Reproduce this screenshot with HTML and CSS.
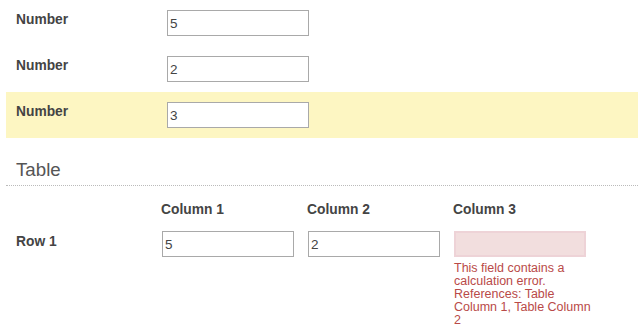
FILE: index.html
```html
<!DOCTYPE html>
<html>
<head>
<meta charset="utf-8">
<link rel="stylesheet" href="styles.css">
</head>
<body>
<div class="page">
  <div class="field">
    <label class="label">Number</label>
    <input class="input" type="text" value="5">
  </div>
  <div class="field">
    <label class="label">Number</label>
    <input class="input" type="text" value="2">
  </div>
  <div class="field field-highlight">
    <label class="label">Number</label>
    <input class="input" type="text" value="3">
  </div>

  <h2 class="section-title">Table</h2>

  <div class="table">
    <div class="cell"></div>
    <div class="cell col-head">Column 1</div>
    <div class="cell col-head">Column 2</div>
    <div class="cell col-head">Column 3</div>

    <div class="cell row-head">Row 1</div>
    <div class="cell"><input class="input table-input" type="text" value="5"></div>
    <div class="cell"><input class="input table-input" type="text" value="2"></div>
    <div class="cell">
      <input class="input table-input input-error" type="text" value="">
      <div class="error-text">This field contains a calculation error. References: Table Column 1, Table Column 2</div>
    </div>
  </div>
</div>
</body>
</html>
```
FILE: styles.css
```css
html, body {
  margin: 0;
  padding: 0;
  background: #ffffff;
}
body {
  font-family: "Liberation Sans", Arial, sans-serif;
  color: #444444;
}
.page {
  padding-left: 6px;
}
.field {
  display: flex;
  align-items: flex-start;
  height: 46px;
  box-sizing: border-box;
  padding: 10px 10px;
}
.field-highlight {
  background: #fdf6c2;
}
.label {
  width: 151px;
  flex: none;
  font-size: 13.8px;
  font-weight: bold;
  line-height: 16px;
  margin-top: 2px;
  color: #444444;
}
.input {
  box-sizing: border-box;
  width: 142px;
  height: 26px;
  border: 1px solid #a9a9a9;
  padding: 0 2px;
  margin: 0;
  font-family: "Liberation Sans", Arial, sans-serif;
  font-size: 13.5px;
  color: #444444;
  background: #ffffff;
  outline: none;
}
.section-title {
  margin: 21px 0 0 0;
  padding: 0 10px 4px 10px;
  font-size: 18.7px;
  line-height: 22px;
  font-weight: normal;
  color: #555555;
  border-bottom: 1px dotted #bbbbbb;
}
.table {
  display: grid;
  grid-template-columns: 145px 146px 146px 146px;
  grid-template-rows: 16px auto;
  row-gap: 13px;
  padding-left: 10px;
  margin-top: 16px;
}
.col-head {
  font-size: 13.8px;
  font-weight: bold;
  line-height: 16px;
  color: #444444;
}
.row-head {
  font-size: 13.8px;
  font-weight: bold;
  line-height: 16px;
  margin-top: 3px;
  color: #444444;
}
.table-input {
  width: 132px;
  margin-left: 1px;
}
.input-error {
  background: #f2dede;
  border: 2px solid #eed3d7;
}
.error-text {
  margin-left: 1px;
  margin-top: 5px;
  width: 144px;
  font-size: 12.5px;
  line-height: 13px;
  color: #b94a48;
}
```
